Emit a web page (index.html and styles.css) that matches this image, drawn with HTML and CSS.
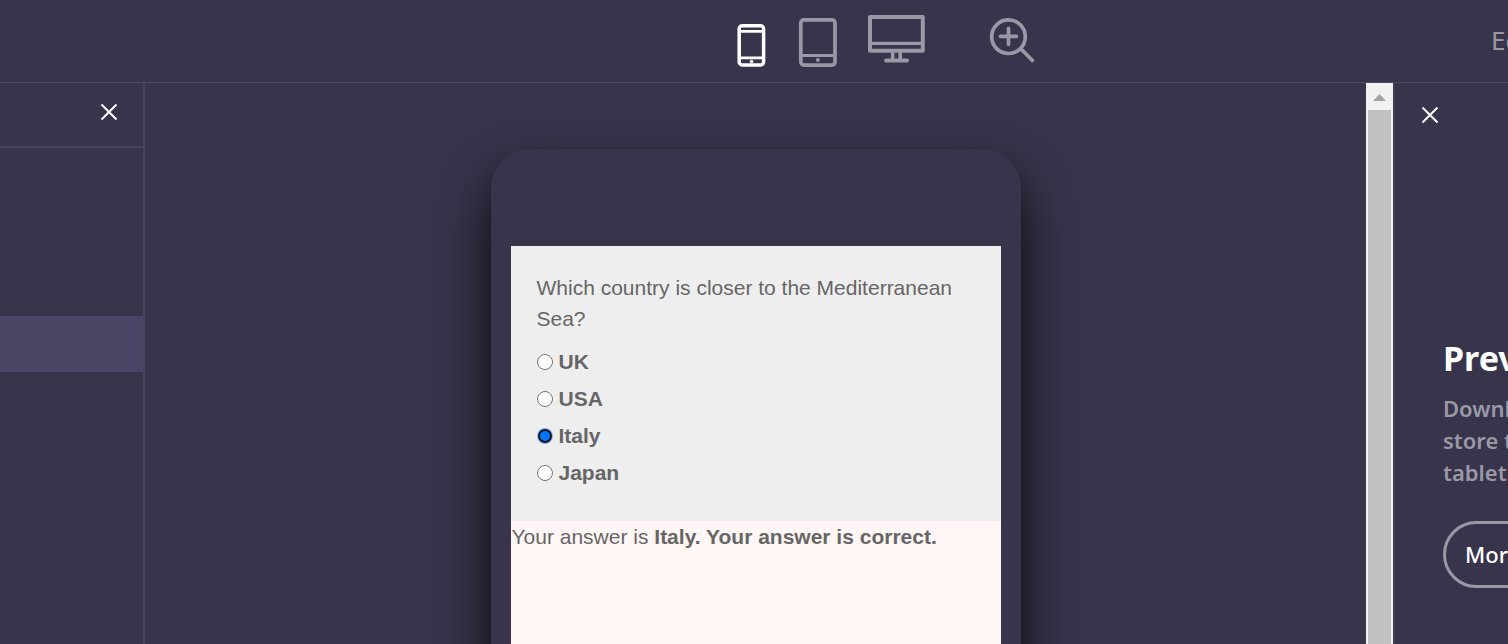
FILE: index.html
```html
<!DOCTYPE html>
<html lang="en">
<head>
<meta charset="utf-8">
<meta name="viewport" content="width=device-width, initial-scale=1">
<title>Preview</title>
<link rel="stylesheet" href="styles.css">
</head>
<body>
<header class="toolbar">
  <div class="devices">
    <button class="tool tool-active" type="button" aria-label="Phone">
      <svg width="30" height="44" viewBox="0 0 30 44" fill="none" stroke="currentColor" stroke-width="3.500"><rect x="2.200" y="2.800" width="24.400" height="39.200" rx="3"/><path d="M3 8.300h24M3 34.800h24" stroke-width="2.800"/><circle cx="14.600" cy="38.500" r="1.800" fill="currentColor" stroke="none"/></svg>
    </button>
    <button class="tool" type="button" aria-label="Tablet">
      <svg width="40" height="50" viewBox="0 0 40 50" fill="none" stroke="currentColor" stroke-width="3.700"><rect x="3.800" y="2.900" width="34.200" height="45.200" rx="3"/><path d="M4 38.400h34" stroke-width="3"/><circle cx="20.900" cy="43" r="2" fill="currentColor" stroke="none"/></svg>
    </button>
    <button class="tool" type="button" aria-label="Desktop">
      <svg width="58" height="50" viewBox="0 0 58 50" fill="none" stroke="currentColor" stroke-width="4"><rect x="3" y="4" width="52.800" height="33.700" stroke-linejoin="round"/><path d="M3 30.300h52" stroke-width="3.300"/><path d="M25.700 38v9M33.200 38v9" stroke-width="3.600"/><path d="M19 47.500h21" stroke-linecap="round"/></svg>
    </button>
    <button class="tool tool-zoom" type="button" aria-label="Zoom in">
      <svg width="46" height="46" viewBox="0 0 46 46" fill="none" stroke="currentColor" stroke-width="3.700" stroke-linecap="round"><circle cx="19.500" cy="18.700" r="16.800"/><path d="M31.500 30.500l13 13" stroke-linecap="butt"/><path d="M11.500 18.300h16M19.500 10.300v16"/></svg>
    </button>
  </div>
  <a class="edit" href="#">Edit</a>
</header>
<main class="workspace">
  <aside class="pages">
    <div class="pages-head">
      <button class="close" type="button" aria-label="Close pages"><svg width="18" height="18" viewBox="0 0 18 18" stroke="currentColor" stroke-width="2"><path d="M1.500 1.500l15 15M16.500 1.500l-15 15"/></svg></button>
    </div>
    <div class="pages-current"></div>
  </aside>
  <section class="stage">
    <div class="phone">
      <div class="screen">
        <form class="quiz">
          <fieldset class="choices">
            <legend class="question">Which country is closer to the Mediterranean Sea?</legend>
            <label class="choice"><input type="radio" name="country">UK</label>
            <label class="choice"><input type="radio" name="country">USA</label>
            <label class="choice"><input type="radio" name="country" checked>Italy</label>
            <label class="choice"><input type="radio" name="country">Japan</label>
          </fieldset>
        </form>
        <p class="result">Your answer is <b>Italy. Your answer is correct.</b></p>
      </div>
    </div>
  </section>
  <div class="scrollbar">
    <svg class="scroll-up" width="13" height="7" viewBox="0 0 13 7"><path d="M0 7L6.500 0L13 7z" fill="#a3a3a3"/></svg>
    <div class="thumb"></div>
  </div>
  <aside class="info">
    <button class="close" type="button" aria-label="Close panel"><svg width="18" height="18" viewBox="0 0 18 18" stroke="currentColor" stroke-width="2"><path d="M1.500 1.500l15 15M16.500 1.500l-15 15"/></svg></button>
    <div class="promo">
      <h2>Preview</h2>
      <p>Download<br>store to<br>tablet</p>
      <button class="more" type="button">More</button>
    </div>
  </aside>
</main>
</body>
</html>
```

FILE: styles.css
```css
* { box-sizing: border-box; }

body {
  margin: 0;
  height: 100vh;
  display: flex;
  flex-direction: column;
  overflow: hidden;
  background: #37344b;
  color: #fff;
  font-family: "Noto Sans", sans-serif;
}

button {
  margin: 0;
  padding: 0;
  border: 0;
  background: none;
  color: inherit;
  font: inherit;
}

svg { display: block; }

.toolbar {
  flex: none;
  height: 83px;
  display: flex;
  align-items: center;
  border-bottom: 1px solid #4b4868;
}

.devices {
  margin-left: calc(50% - 17px);
  display: flex;
  align-items: flex-end;
  gap: 30px;
  padding-bottom: 2px;
}

.tool { color: #9b98a6; }
.tool:nth-child(3) { padding-bottom: 4px; }
.tool-active { color: #fff; }
.tool-zoom { margin-left: 34px; padding-bottom: 3px; }

.edit {
  width: 17px;
  margin-left: auto;
  padding-bottom: 2px;
  overflow: hidden;
  white-space: nowrap;
  color: #9b98a6;
  font-size: 26px;
  line-height: 36px;
  text-decoration: none;
}

.workspace {
  flex: 1;
  min-height: 0;
  display: flex;
}

.pages {
  flex: none;
  width: 145px;
  border-right: 2px solid #464459;
}

.pages-head {
  display: flex;
  justify-content: flex-end;
  padding: 20px 25px 25px;
  border-bottom: 2px solid #464459;
}

.pages-current {
  height: 56px;
  margin-top: 168px;
  background: #484664;
}

.stage {
  flex: 1;
  display: flex;
  justify-content: center;
  padding-top: 66px;
  overflow: hidden;
}

.phone {
  flex: none;
  width: 530px;
  height: 960px;
  padding: 97px 20px;
  border-radius: 40px;
  box-shadow: 0 26px 50px rgba(0, 0, 0, 0.84);
  background: #37344b;
}

.screen {
  height: 100%;
  background: #fff6f5;
  color: #666;
  font: 21px/31px "Liberation Sans", Arial, sans-serif;
}

.quiz {
  padding: 26px 26px 30px;
  background: #eee;
}

.choices {
  margin: 0;
  padding: 0;
  border: 0;
  min-width: 0;
}

.question { padding: 0 0 9px; }

.choice {
  display: flex;
  align-items: center;
  height: 37px;
  gap: 6px;
  font-weight: bold;
}

.choice input {
  appearance: none;
  width: 16px;
  height: 16px;
  margin: 0;
  border: 1px solid #767676;
  border-radius: 50%;
  background: #fff;
}

.choice input:checked {
  border: 2px solid #111;
  background: #0075ff;
  box-shadow: 0 0 0 1px #7bb8ff;
  width: 14px;
  height: 14px;
  margin: 0 1px;
}

.result { margin: 0; padding-left: 1px; }

.scrollbar {
  flex: none;
  width: 27px;
  display: flex;
  flex-direction: column;
  align-items: center;
  padding-top: 11px;
  background: #f1f1f1;
}

.thumb {
  flex: 1;
  width: 23px;
  margin-top: 9px;
  background: #c1c1c1;
}

.info {
  flex: none;
  width: 115px;
  padding: 23px 0 0 26px;
  border-left: 2px solid #413e57;
  overflow: hidden;
  white-space: nowrap;
}

.promo { padding: 205px 0 0 22px; }

.promo h2 {
  margin: 0;
  font-size: 34px;
  line-height: 48px;
}

.promo p {
  margin: 10px 0 33px;
  color: #9b98a6;
  font-size: 22px;
  font-weight: 600;
  line-height: 32px;
}

.more {
  width: 190px;
  height: 67px;
  padding: 0 0 2px 19px;
  border: 3px solid #9b98a6;
  border-radius: 34px;
  font-size: 22px;
  font-weight: 500;
  text-align: left;
}
```
